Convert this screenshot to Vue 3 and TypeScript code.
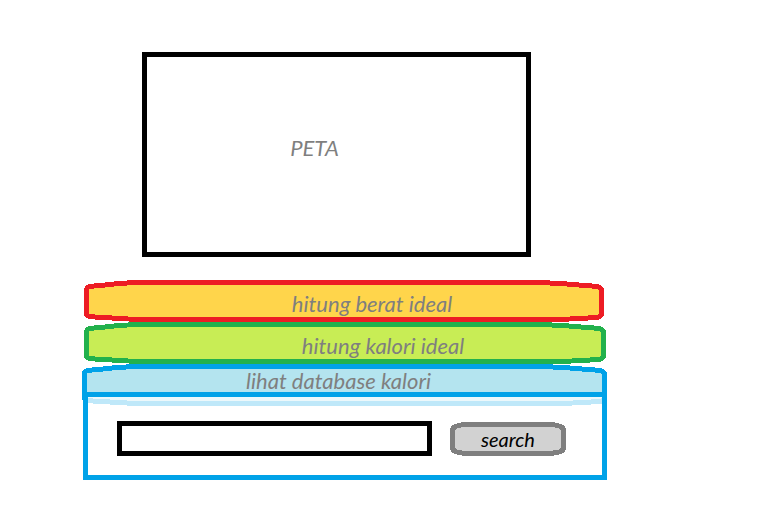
<script setup lang="ts">
import { ref } from 'vue'

interface Tab {
  id: string
  label: string
}

// Hand-drawn lozenge shared by the three tabs.
const outline =
  'M2.5 35V9L4 7L10 6L21 5L34 3.5L53 2.5H455L477 3.5L495 5L508 6L515 7L517.5 9V35L515 37L504 38L486 39L461 39.5H66L44 39L28 38L11 37L4 36Z'

const tabs: Tab[] = [
  { id: 'weight', label: 'hitung berat ideal' },
  { id: 'calories', label: 'hitung kalori ideal' },
  { id: 'database', label: 'lihat database kalori' },
]

const active = ref('database')
const query = ref('')
</script>

<template>
  <main class="page">
    <section class="map">PETA</section>

    <nav class="tabs">
      <button
        v-for="tab in tabs"
        :key="tab.id"
        type="button"
        class="tab"
        :class="tab.id"
        :aria-expanded="active === tab.id"
        @click="active = tab.id"
      >
        <svg class="shape" viewBox="0 0 520 42" preserveAspectRatio="none" aria-hidden="true">
          <path :d="outline" />
        </svg>
        <span class="label">{{ tab.label }}</span>
      </button>
    </nav>

    <form v-if="active === 'database'" class="panel" @submit.prevent>
      <input v-model="query" class="query" type="text" aria-label="kalori" />
      <button class="search" type="submit">
        <svg class="shape" viewBox="0 0 116 34" preserveAspectRatio="none" aria-hidden="true">
          <path
            d="M2.5 26V8Q3 5 7 4Q11 2.5 17 2.5H99Q105 2.5 109 4Q113 5 113.5 8V26Q113 29 109 30Q103 31.5 97 31.5H19Q12 31.5 7 30Q3 29 2.5 26Z"
          />
        </svg>
        <span class="label">search</span>
      </button>
    </form>
  </main>
</template>

<style>
body {
  margin: 0;
  background: #fff;
}
</style>

<style scoped>
.page {
  box-sizing: border-box;
  padding: 52px 161px 36px 82px;
  color: #7f7f7f;
  font-family: Lato, "Liberation Sans", sans-serif;
  font-size: 22px;
  font-style: italic;
  line-height: 24px;
}

.map {
  box-sizing: border-box;
  display: flex;
  align-items: center;
  justify-content: center;
  height: 205px;
  margin: 0 76px 23px 60px;
  padding: 0 44px 14px 0;
  border: 5px solid #000;
}

.tabs {
  display: flex;
  flex-direction: column;
}

.tab,
.search {
  display: grid;
  align-items: center;
  padding: 0;
  border: 0;
  background: none;
  color: inherit;
  font: inherit;
  cursor: pointer;
}

.shape,
.label {
  grid-area: 1 / 1;
}

.shape {
  display: block;
  width: 100%;
  height: 42px;
  stroke-width: 5px;
  stroke-linejoin: round;
  shape-rendering: crispEdges;
}

.label {
  text-align: center;
}

.weight {
  margin: 0 3px 0 2px;
}

.weight .shape {
  fill: #ffd54b;
  stroke: #ed1c24;
}

.weight .label {
  padding: 6px 0 0 56px;
}

.calories {
  margin: 0 1px 0 2px;
}

.calories .shape {
  fill: #c8ed55;
  stroke: #22b14c;
}

.calories .label {
  padding: 6px 0 0 76px;
}

.database .shape {
  fill: #b4e4ef;
  stroke: #00a2e8;
}

.database .label {
  padding: 0 12px 8px 0;
}

.panel {
  position: relative;
  display: flex;
  align-items: flex-start;
  gap: 18px;
  margin: -14px 0 0 1px;
  padding: 24px 36px 19px 29px;
  border: 5px solid #00a2e8;
  background: rgba(255, 255, 255, 0.75);
}

.query {
  box-sizing: border-box;
  flex: 1;
  min-width: 0;
  height: 35px;
  padding: 0 8px;
  border: 5px solid #000;
  border-radius: 0;
  background: #fff;
  color: #000;
  font: inherit;
}

.search {
  width: 116px;
  margin-top: 1px;
  color: #000;
  font-size: 20px;
}

.search .shape {
  height: 34px;
  fill: #d2d2d2;
  stroke: #7f7f7f;
}
</style>
